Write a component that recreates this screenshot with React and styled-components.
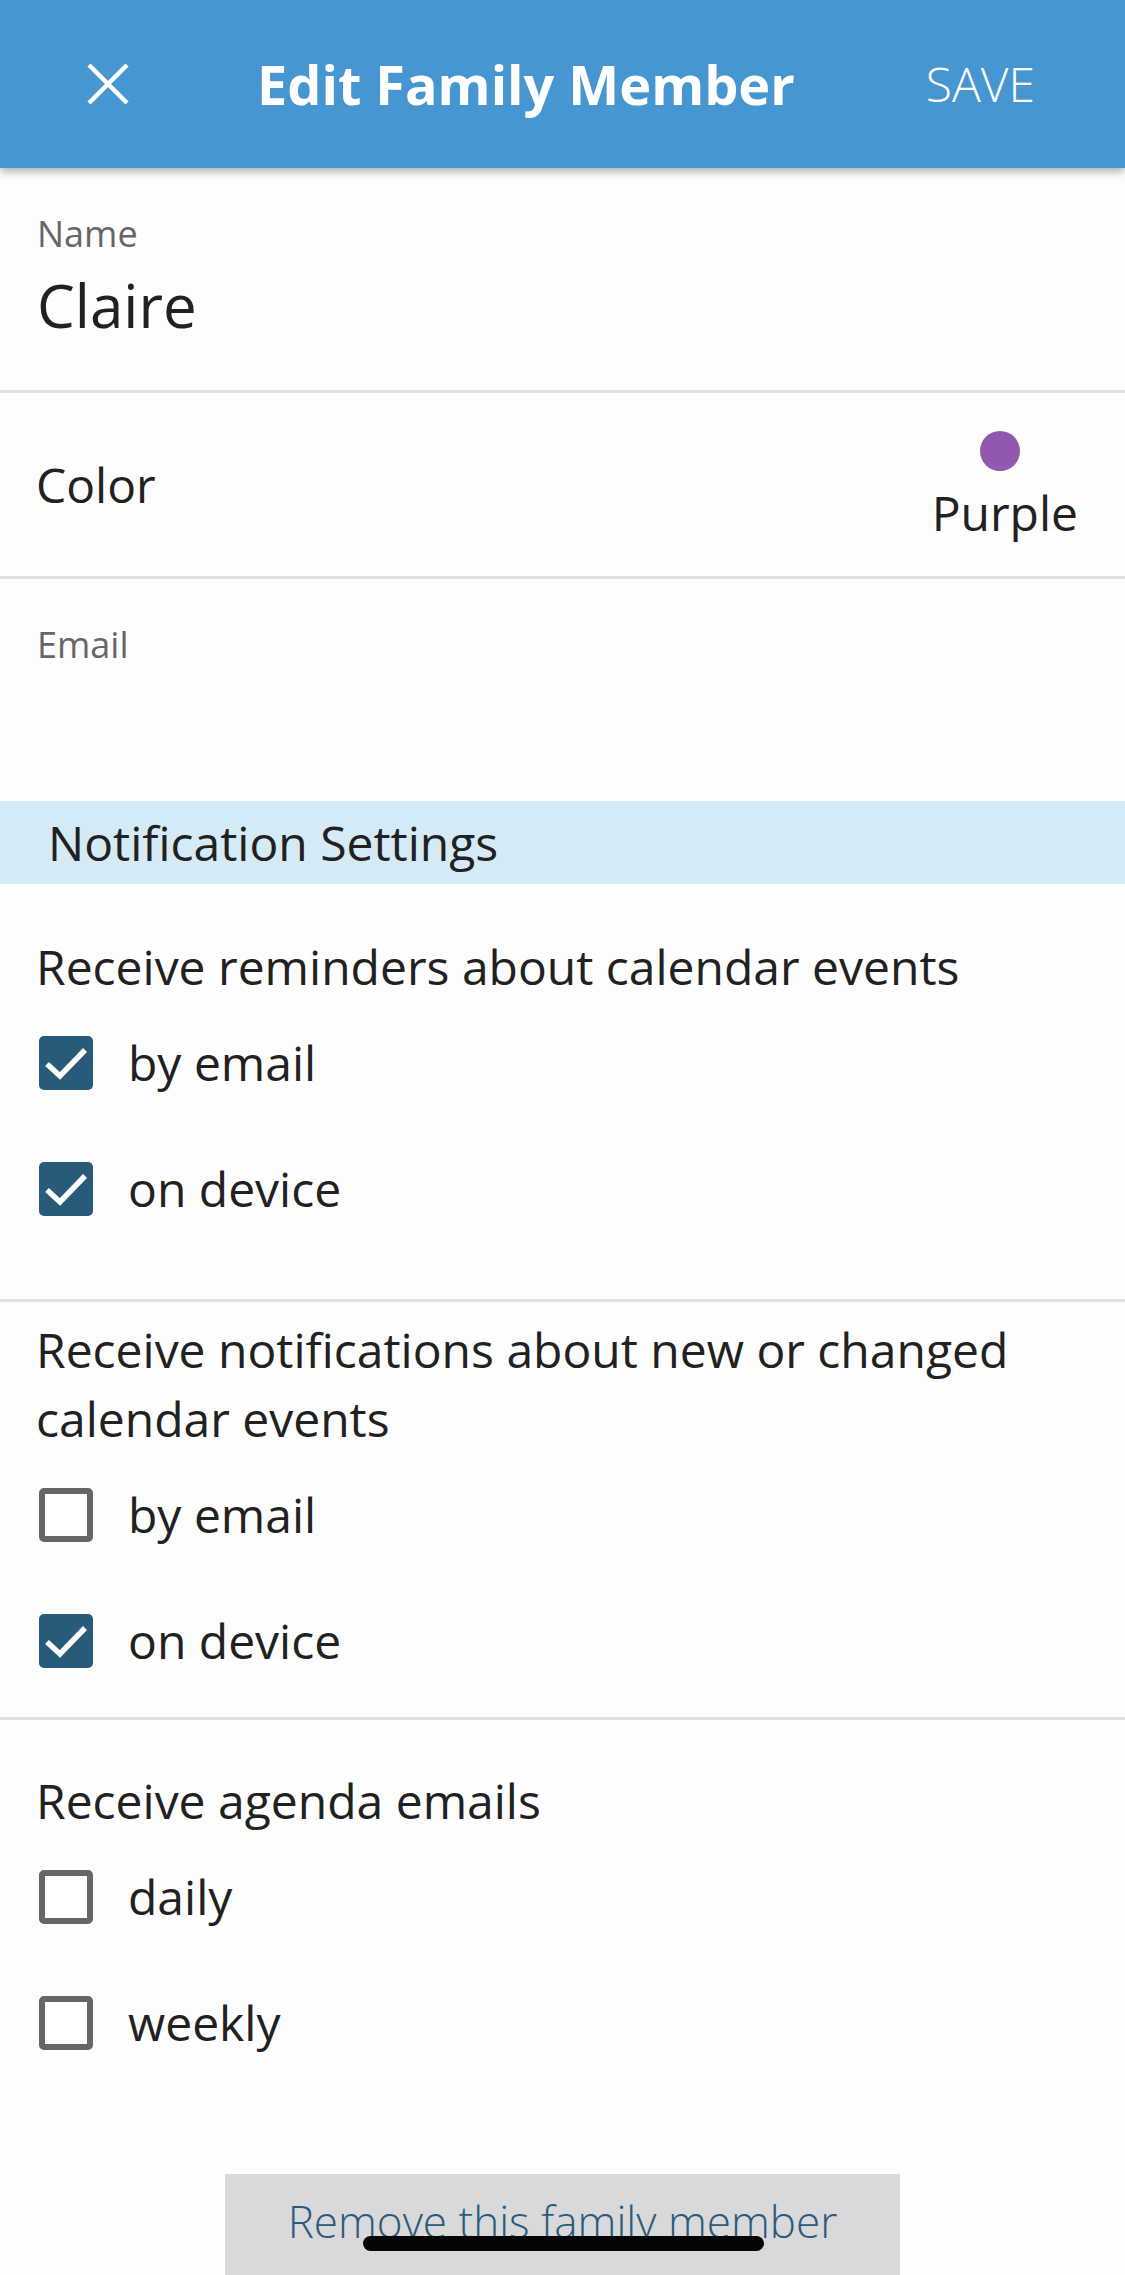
import React from "react";
import styled, { createGlobalStyle } from "styled-components";

const GlobalStyle = createGlobalStyle`
  html, body {
    margin: 0;
    padding: 0;
    background: #fdfdfd;
  }
  body {
    font-family: "Open Sans", "Noto Sans", "Liberation Sans", sans-serif;
    color: #212121;
  }
  * { box-sizing: border-box; }
`;

const Screen = styled.div`
  position: relative;
  width: 1125px;
  height: 2275px;
  overflow: hidden;
  background: #fdfdfd;
`;

const Header = styled.header`
  position: relative;
  z-index: 2;
  height: 168px;
  background: #4697d1;
  display: flex;
  align-items: center;
  box-shadow: 0 3px 9px rgba(0, 0, 0, 0.35);
  color: #ffffff;
`;

const CloseButton = styled.button`
  margin-left: 87px;
  width: 42px;
  height: 42px;
  padding: 0;
  border: none;
  background: transparent;
  display: flex;
  align-items: center;
  justify-content: center;
  cursor: pointer;
`;

const Title = styled.h1`
  margin: 0 0 0 128px;
  font-size: 54px;
  line-height: 74px;
  font-weight: 700;
  letter-spacing: 0;
`;

const SaveButton = styled.button`
  margin-left: auto;
  margin-right: 90px;
  padding: 0;
  border: none;
  background: transparent;
  color: #ffffff;
  font-family: inherit;
  font-size: 48px;
  line-height: 66px;
  font-weight: 300;
  cursor: pointer;
`;

const Field = styled.div`
  padding: 42px 34px 45px 37px;
  border-bottom: ${(p) => (p.$divider ? "3px solid #e2e2e2" : "none")};
  display: flex;
  flex-direction: column;
  gap: 7px;
`;

const FieldLabel = styled.div`
  font-size: 36px;
  line-height: 48px;
  color: #666666;
`;

const FieldValue = styled.div`
  font-size: 60px;
  line-height: 80px;
  min-height: 80px;
  color: #212121;
`;

const ColorRow = styled.div`
  height: 186px;
  padding: 0 47px 0 36px;
  border-bottom: 3px solid #e2e2e2;
  display: flex;
  align-items: center;
  justify-content: space-between;
`;

const RowLabel = styled.div`
  font-size: 48px;
  line-height: 66px;
`;

const ColorValue = styled.div`
  padding-top: 8px;
  display: flex;
  flex-direction: column;
  align-items: center;
  gap: 9px;
`;

const Swatch = styled.span`
  width: 40px;
  height: 40px;
  border-radius: 50%;
  background: ${(p) => p.$color};
  margin-right: 10px;
`;

const ColorName = styled.div`
  font-size: 48px;
  line-height: 66px;
`;

const SectionHeader = styled.div`
  height: 83px;
  background: #d4eaf6;
  padding-left: 48px;
  font-size: 48px;
  line-height: 83px;
  color: #212121;
`;

const Group = styled.section`
  padding: ${(p) => p.$top}px 34px ${(p) => p.$bottom}px 36px;
  border-bottom: ${(p) => (p.$divider ? "3px solid #e2e2e2" : "none")};
  display: flex;
  flex-direction: column;
`;

const GroupTitle = styled.div`
  font-size: 48px;
  line-height: 69px;
  margin-bottom: 24px;
  padding-right: 20px;
`;

const Options = styled.div`
  display: flex;
  flex-direction: column;
  gap: 50px;
`;

const OptionRow = styled.label`
  height: 76px;
  padding-left: 3px;
  display: flex;
  align-items: center;
`;

const Box = styled.span`
  width: 54px;
  height: 54px;
  flex: 0 0 54px;
  border-radius: 5px;
  display: flex;
  align-items: center;
  justify-content: center;
  background: ${(p) => (p.$checked ? "#285a7a" : "#ffffff")};
  border: ${(p) => (p.$checked ? "none" : "6px solid #666666")};
`;

const OptionText = styled.span`
  margin-left: 35px;
  font-size: 48px;
  line-height: 66px;
`;

const Footer = styled.div`
  display: flex;
  justify-content: center;
  padding-top: 113px;
`;

const RemoveButton = styled.button`
  width: 675px;
  height: 130px;
  border: none;
  border-radius: 0;
  background: #d9d9d9;
  color: #2b5b7c;
  font-family: inherit;
  font-size: 44px;
  line-height: 56px;
  font-weight: 300;
  padding: 19px 0 0 0;
  display: flex;
  justify-content: center;
  align-items: flex-start;
  cursor: pointer;
`;

const HomeIndicator = styled.div`
  position: absolute;
  left: 50%;
  bottom: 24px;
  width: 401px;
  height: 15px;
  margin-left: -200px;
  border-radius: 8px;
  background: #050505;
  z-index: 5;
`;

const CloseIcon = () => (
  <svg width="42" height="42" viewBox="0 0 42 42">
    <path d="M2 2 L40 40 M40 2 L2 40" stroke="#ffffff" strokeWidth="4.5" fill="none" />
  </svg>
);

const CheckIcon = () => (
  <svg width="54" height="54" viewBox="0 0 54 54">
    <path
      d="M8 28 L21 40 L46 14"
      stroke="#ffffff"
      strokeWidth="5.5"
      fill="none"
      strokeLinecap="butt"
      strokeLinejoin="miter"
    />
  </svg>
);

const Checkbox = ({ checked, label }) => (
  <OptionRow>
    <Box $checked={checked}>{checked && <CheckIcon />}</Box>
    <OptionText>{label}</OptionText>
  </OptionRow>
);

const groups = [
  {
    title: "Receive reminders about calendar events",
    top: 48,
    bottom: 72,
    divider: true,
    options: [
      { label: "by email", checked: true },
      { label: "on device", checked: true },
    ],
  },
  {
    title: "Receive notifications about new or changed calendar events",
    top: 13,
    bottom: 38,
    divider: true,
    options: [
      { label: "by email", checked: false },
      { label: "on device", checked: true },
    ],
  },
  {
    title: "Receive agenda emails",
    top: 46,
    bottom: 0,
    divider: false,
    options: [
      { label: "daily", checked: false },
      { label: "weekly", checked: false },
    ],
  },
];

export default function App() {
  return (
    <>
      <GlobalStyle />
      <Screen>
        <Header>
          <CloseButton aria-label="Close">
            <CloseIcon />
          </CloseButton>
          <Title>Edit Family Member</Title>
          <SaveButton>SAVE</SaveButton>
        </Header>

        <Field $divider>
          <FieldLabel>Name</FieldLabel>
          <FieldValue>Claire</FieldValue>
        </Field>

        <ColorRow>
          <RowLabel>Color</RowLabel>
          <ColorValue>
            <Swatch $color="#9158ad" />
            <ColorName>Purple</ColorName>
          </ColorValue>
        </ColorRow>

        <Field>
          <FieldLabel>Email</FieldLabel>
          <FieldValue />
        </Field>

        <SectionHeader>Notification Settings</SectionHeader>

        {groups.map((g) => (
          <Group key={g.title} $top={g.top} $bottom={g.bottom} $divider={g.divider}>
            <GroupTitle>{g.title}</GroupTitle>
            <Options>
              {g.options.map((o) => (
                <Checkbox key={o.label} label={o.label} checked={o.checked} />
              ))}
            </Options>
          </Group>
        ))}

        <Footer>
          <RemoveButton>Remove this family member</RemoveButton>
        </Footer>

        <HomeIndicator />
      </Screen>
    </>
  );
}
